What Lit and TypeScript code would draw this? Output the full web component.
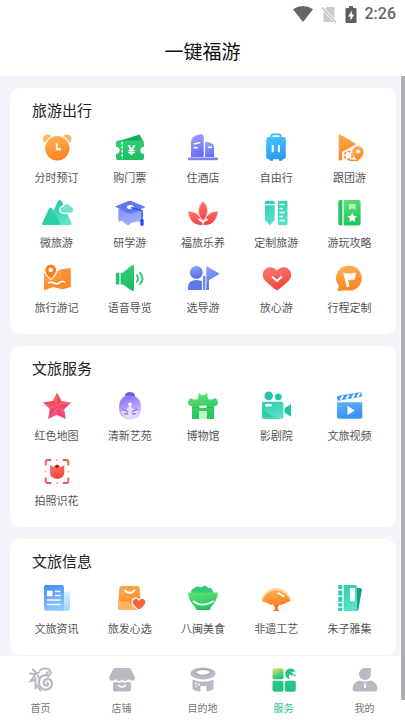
import { LitElement, html, svg, css, SVGTemplateResult } from "lit";
import { customElement } from "lit/decorators.js";
import { classMap } from "lit/directives/class-map.js";

type Item = { label: string; icon: SVGTemplateResult };
type Section = { title: string; items: Item[] };

// Two-stop gradients shared by the icons: id, start colour, end colour.
const gradients: [string, string, string][] = [
  ["orange", "#ffb558", "#fd8424"],
  ["amber", "#ffa94a", "#fb8a2c"],
  ["green", "#2fd07a", "#1fbf66"],
  ["lime", "#62e374", "#22c55e"],
  ["violet", "#a3a5fa", "#6a70f3"],
  ["indigo", "#7f93f8", "#a5b0fb"],
  ["periwinkle", "#8fa4fb", "#5573f0"],
  ["sky", "#43c6fb", "#2f9df4"],
  ["teal", "#18c9a0", "#5fe6c6"],
  ["aqua", "#2fcdb0", "#58e0c8"],
  ["red", "#fb7a72", "#f5433f"],
  ["rose", "#fb6c4d", "#fa4f8a"],
  ["purple", "#7d68f2", "#d9c8ff"],
  ["blue", "#3f8bf8", "#8cc6fd"],
  ["azure", "#58b1fb", "#3a93f3"],
  ["pale", "#e4f3ff", "#a5dafe"],
  ["leaf", "#e9e05b", "#18c183"],
];

const i = {
  clock: svg`
    <circle cx="5.5" cy="6" r="4.5" fill="#ffb566"/><circle cx="25" cy="6" r="4.5" fill="#ffb566"/>
    <circle cx="15.3" cy="15.3" r="13.4" fill="#fff"/>
    <circle cx="15.3" cy="15.3" r="12.2" fill="url(#orange)"/>
    <path d="M14.8 10.2v6h4.2" fill="none" stroke="#fff" stroke-width="2"/>`,
  ticket: svg`
    <path d="M4 8 24.5 1.4 28 8z" fill="#17a956"/>
    <path d="M3 7.5h24a2 2 0 0 1 2 2v4.2a3.6 3.6 0 0 0 0 7.2V25a2 2 0 0 1-2 2H3a2 2 0 0 1-2-2v-4.100a3.6 3.6 0 0 0 0-7.200V9.500a2 2 0 0 1 2-2z" fill="url(#green)"/>
    <path d="M7.200 9v17" stroke="#fff" stroke-width="1.600" stroke-dasharray="2.400 1.700"/>
    <text class="yen" x="16.500" y="21.500" text-anchor="middle">¥</text>`,
  hotel: svg`
    <path d="M3 24V9C3 4 9 1.300 13 1.300q2.700 0 2.700 3V24z" fill="url(#violet)"/>
    <path d="M17 24V8.700q7 .3 9 4V24z" fill="url(#violet)"/>
    <rect x="0" y="24.600" width="30" height="2.600" rx="1" fill="#7d81f5"/>
    <path d="M5.700 11 12.300 9.500M5.700 14.700h4M20 14.300h4" stroke="#fff" stroke-width="1.600"/>`,
  suitcase: svg`
    <path d="M10.500 5V2.800q0-1.500 1.500-1.500h6q1.500 0 1.500 1.500V5" fill="none" stroke="#3ab5f8" stroke-width="1.800"/>
    <path d="M8 25h4v2.800H9zM18 25h4l-1 2.800h-3z" fill="#2a98ee"/>
    <rect x="5.200" y="4" width="19.600" height="22.300" rx="3" fill="url(#sky)"/>
    <path d="M11.700 12v7.200M17.900 12v7.200" stroke="#fff" stroke-width="2"/>`,
  tour: svg`
    <path d="M4.700 2.400q0-1.500 1.500-.8L21 10.300q1.300.9 0 1.700L8.200 19v8.300H4.700z" fill="url(#amber)"/>
    <circle cx="14.500" cy="22.400" r="5.800" fill="#fff"/>
    <circle cx="14.500" cy="22.400" r="4" fill="none" stroke="#f98b34" stroke-width="1.600" stroke-dasharray="3 1.400"/>
    <path d="M24 12.800a6 6 0 0 1 6 6c0 3.500-3 6.500-6 9-3-2.500-6-5.500-6-9a6 6 0 0 1 6-6z" fill="url(#orange)" stroke="#fff" stroke-width=".6"/>
    <circle cx="24" cy="18.600" r="2" fill="#fff"/><path d="M15 27.300h9" stroke="#f98b34" stroke-width="1.500"/>`,
  mountain: svg`
    <path d="M14 27 10.500 15 15.500 4q2.300-4 4.700 0l9.300 21q.5 2-1 2z" fill="url(#teal)"/>
    <path d="M1.500 27q-2 0-1.200-2L6.800 11q1.800-3 3.600 0l7.600 14q.7 2-1 2z" fill="#2bd0a8"/>
    <path d="M21.300 15.300a3.500 3.500 0 0 1-.3-7 4.500 4.500 0 0 1 8-.3 3.700 3.700 0 0 1-.2 7.300z" fill="#6fe3cb" stroke="#fff" stroke-width="1.300"/>`,
  cap: svg`
    <path d="M3.300 11v13q4-2.500 6.500 1.500l3.500 2q2.500-3.500 6-3 4.500-1.800 6.700 0V11z" fill="url(#indigo)"/>
    <path d="M0 8.400 13.500 3q1.500-.5 3 0L30.500 9l-14 6.600q-1.500.6-3 0z" fill="#6577ee"/>
    <ellipse cx="15.300" cy="9" rx="3.300" ry="2" fill="#fff"/>
    <path d="m16 9.500 11 3.200v9" fill="none" stroke="#2b50e8" stroke-width="1.500"/>
    <rect x="25.400" y="21" width="3.300" height="6.800" rx="1" fill="#2049ea"/>`,
  lotus: svg`
    <path d="M0 13.600q9-.6 13.600 8.400l1 4.900Q2.800 28.500 0 13.600zM30 13.600q-9-.6-13.600 8.400l-1 4.900Q27.200 28.500 30 13.600z" fill="url(#red)"/>
    <path d="M15 2.800q9.400 9.700 0 20.700-9.400-11 0-20.700z" fill="url(#red)" stroke="#fff" stroke-width=".7"/>
    <path d="m10.500 21 4.500 3 4.500-3" fill="none" stroke="#fff" stroke-width="1.600"/>`,
  pencil: svg`
    <path d="M4 4.200q0-1.500 1.500-1.500h6.700q1.500 0 1.500 1.500V6H4zM4 7.200h9.700V22l-4.800 5.500L4 22z" fill="url(#aqua)"/>
    <rect x="17" y="2.700" width="9.500" height="24.600" rx="1.500" fill="url(#aqua)"/>
    <path d="M17 6.500h5M17 10.500h3.500M17 14.500h5M17 18.500h3.500M17 22.500h5" transform="translate(1.500)" stroke="#fff" stroke-width="1.400"/>`,
  guidebook: svg`
    <path d="M8.400 2v25.600H6.300q-2-.1-2-2V4q0-2 2-2z" fill="#27c463"/>
    <path d="M9.600 2h15q2 0 2 2v21.600q0 2-2 2h-15z" fill="url(#lime)"/>
    <path d="M15 6h6.600v6l-3.300-1.800L15 12z" fill="#b5f3bf"/>
    <path d="m18.300 14.800 1.500 3 3.300.5-2.400 2.300.6 3.300-3-1.600-3 1.600.6-3.300-2.400-2.300 3.300-.5z" fill="#fff"/>`,
  map: svg`
    <path d="M2 10.500q4.500 2 8 0l9-4 9.700-1.600V24l-8.500 2.300L11 24l-9 3.500z" fill="url(#amber)"/>
    <path d="m19 6.500 9.700-1.600V24l-8.500 2.300z" fill="#fb7f18" opacity=".35"/>
    <path d="M6 20.300c5-3.500 6.500 2 10 .3s4-4 7-.8" fill="none" stroke="#fff" stroke-width="1.500"/>
    <path d="M8.700 1a6 6 0 0 1 6 6c0 3.500-3 7-6 9.600-3-2.600-6-6.100-6-9.600a6 6 0 0 1 6-6z" fill="#fb7d1c" stroke="#fff" stroke-width="1.200"/>
    <circle cx="8.700" cy="6.900" r="2.200" fill="#fff"/>`,
  speaker: svg`
    <rect x=".8" y="9.700" width="3.600" height="11.700" rx="1" fill="#23c46a"/>
    <path d="M5.600 9.700h2.200L16.500 2.400q2.500-1.300 2.500 1.100v23q0 2.400-2.500 1.100l-8.700-6.200H5.600z" fill="url(#green)"/>
    <path d="M21.800 12.300q2.300 3.200 0 6.400M25 9.800q5 5.700 0 11.400" fill="none" stroke="#25c56c" stroke-width="1.800" stroke-linecap="round"/>`,
  guide: svg`
    <path d="M0 27v-3q.3-6.800 8.500-7 4 0 5.500 1.500V27z" fill="#5f77ef"/>
    <circle cx="8.300" cy="9.400" r="6.400" fill="url(#periwinkle)"/>
    <rect x="15" y="13" width="2.400" height="14" fill="#6d84f2"/>
    <path d="M18.300 4q0-1 1-.6L31 10.200q.8.500 0 1L21 17v10h-2.700z" fill="url(#periwinkle)"/>`,
  heart: svg`
    <path d="M16 27.300Q14 26.800 4.500 18C-1.500 11.800 3.500 4.300 9 4.300q4 0 7 3.300 3-3.300 7-3.300c5.500 0 10.500 7.500 4.500 13.700Q18 26.800 16 27.300z" fill="url(#red)"/>
    <path d="m11 13.500 5 4.500 5-4.500" fill="none" stroke="#fff" stroke-width="2"/>`,
  route: svg`
    <path d="M15.800 2.800a12.400 12.400 0 1 1-3.500 24.400L4.500 28q-1.200 0-.8-1.300l1-4A12.400 12.400 0 0 1 15.800 2.800z" fill="url(#orange)"/>
    <path d="M9 9.500q5 2 13.300-.1l-1.800 7.300q-4-.8-6.300.6l1.300 6.700h-2.700z" fill="#fff"/>`,
  star: svg`
    <path d="m15 1.700 4.400 8.400 9.600 1.500-6.800 6.700L23.800 28 15 23.700 6.200 28l1.600-9.700L1 11.600l9.600-1.500z" fill="url(#rose)"/>
    <path d="M15 1.700V16l4.400-5.900zM29 11.600 15 16l7.200 2.300zM23.800 28 15 16v7.700zM6.200 28 15 16l-7.200 2.300zM1 11.600 15 16l-4.400-5.900z" fill="#e5234e" opacity=".35"/>`,
  lady: svg`
    <ellipse cx="15" cy="4.600" rx="5" ry="3.600" fill="#6f5be0"/>
    <path d="M15 4.500c8 0 11 5 11 12s-3.500 12-11 12-11-5-11-12 3-12 11-12z" fill="url(#purple)"/>
    <path d="M6 20.500q6-1.500 9-6.500 3 5 9 6.500-2.500 7.300-9 7.300t-9-7.300z" fill="#e5d9ff"/>
    <circle cx="15" cy="13.300" r="1.800" fill="#fff"/>
    <path d="M7.500 18.500q3 .2 5.500 2.600M22.500 18.500q-3 .2-5.500 2.600M9 22.500q2 1 4 0M17 22.500q2 1 4 0" fill="none" stroke="#7d5fe6" stroke-width="1.200"/>`,
  gate: svg`
    <path d="M10.500 5V2.500h2V4h5V2.500h2V5l1 3.500q4.500.5 6.700-1.500 3 1.700 2.800 5.500-1.500 3-4 2.500v13h-7V20h-8v8H4V15q-2.500.5-4-2.500Q-.2 8.700 2.800 7 5 9 9.500 8.500z" fill="url(#lime)"/>
    <path d="M11 20h8v8h-8z" fill="#b9f7c8"/><path d="M4 16.500h22" stroke="#14b554" stroke-width=".8" opacity=".6"/>
    <rect x="11.500" y="14.600" width="7" height="2.400" fill="#fff"/>`,
  camera: svg`
    <circle cx="7.700" cy="4.900" r="4.300" fill="#22c9a6"/><circle cx="17.300" cy="5.800" r="3.400" fill="#22c9a6"/>
    <rect x="1" y="10.700" width="21.400" height="17" rx="2" fill="url(#aqua)"/>
    <path d="M1 17c5 6 10 9 19 10.700H3q-2 0-2-2z" fill="#1fc39f" opacity=".6"/>
    <path d="M23.600 17.300 30 13v12.700l-6.400-3.900z" fill="#1fc6a5"/>
    <rect x="4" y="13" width="7" height="2.400" rx="1" fill="#fff"/>`,
  clapper: svg`
    <path d="M3 6.500q0-1.500 1.500-1.700L26 1.200q1.500 0 1.700 1.200l.3 3.200L4 9.800l-.5-.5z" fill="#3f9cf6"/>
    <path d="m9.200 4.700-2.700 4M15 3.700l-2.700 4M20.800 2.700l-2.700 4M26 2l-2.500 3.700" stroke="#fff" stroke-width="1.800"/>
    <path d="M3 11.300h25.300v14.400q0 2-2 2H5q-2 0-2-2z" fill="url(#azure)"/>
    <path d="M13.500 15v9l7.300-4.500z" fill="#fff"/>`,
  flower: svg`
    <path d="M3.700 9.500V6q0-2 2-2h3.500M20.800 4h3.500q2 0 2 2v3.500M26.300 21.500V25q0 2-2 2h-3.500M9.200 27H5.700q-2 0-2-2v-3.500" fill="none" stroke="#f4584f" stroke-width="1.900"/>
    <path d="M15 3v2M15 26v2M2.700 15.500h2M25.300 15.500h2" stroke="#fba39d" stroke-width="1.500"/>
    <path d="m8 9 3.500 2L15 8.500l3.500 2.500L22.300 9v7c0 4.500-3 6.800-7.200 6.800S8 20.500 8 16z" fill="url(#red)"/>
    <path d="m12.500 10.300 2.500-1.800 2.500 1.800-2.500 1.900z" fill="#a81420"/>`,
  news: svg`
    <path d="M21 7.500h5q2 0 2 2v15.300q0 2-2 2H17z" fill="url(#pale)"/>
    <rect x="2" y="1" width="20" height="25.700" rx="2" fill="url(#blue)"/>
    <rect x="5" y="6.700" width="5.600" height="5.600" fill="#fff"/>
    <path d="M13 7.500h5.500M13 11.500h5.500M5 16h13.500M5 20.500h13.500" stroke="#fff" stroke-width="1.500"/>`,
  bag: svg`
    <path d="M6.500 2h16q2 0 2.200 2l1.300 20q0 2-2 2H5q-2 0-2-2L4.300 4q.2-2 2.200-2z" fill="url(#amber)"/>
    <path d="M3.300 18.500C10 15 19 20 21 26H5q-2 0-2-2z" fill="#ffd08a" opacity=".6"/>
    <path d="M9.500 5.800q5.300 6.500 10.600 0" fill="none" stroke="#fff" stroke-width="2"/>
    <path d="M24 26.400c-4.500-3-7-5.500-7-8.300 0-4 4.700-5.400 7-2.300 2.300-3.100 7-1.700 7 2.300 0 2.800-2.500 5.300-7 8.300z" fill="#f9633c" stroke="#fff" stroke-width="1.300"/>`,
  bowl: svg`
    <path d="M4 10Q1.500 5.500 6 4.500 9 1 13 3.500q4-3.500 7 .3 5-.3 5.500 6.200z" fill="#2fcb71"/>
    <path d="M0 8.500h30Q29.500 16 23 23l-1 3H8.500L7 23Q.5 17 0 8.500z" fill="url(#lime)"/>
    <path d="M5 17q9.500 7.300 20.500 0" fill="none" stroke="#eafff0" stroke-width="1.700"/>`,
  fan: svg`
    <path d="M0 15.500C7-.2 23.500-.2 30.500 15.500l-10.500 5-4.700-1-4.800 1z" fill="#ffd9a0"/>
    <path d="M1 17C7.500 2.800 23 2.800 29.500 17L20 20.900q-4.700-2.300-9.500 0z" fill="url(#orange)"/>
    <path d="m17.300 9.200 5.500 3" stroke="#fff" stroke-width="2" stroke-linecap="round"/>
    <path d="M12 20.500q3.300-1.500 6.600 0L16.500 24l1.500 3h-5.500l1.600-3z" fill="#f9772a"/>`,
  notebook: svg`
    <path d="m22 3.800 4.600.5q1.500.3 1.300 1.800L24.500 25q-.4 2-2.500 2z" fill="#159e8a"/>
    <path d="M9.700 1H21q2 0 2 2v22q0 2-2 2H9.700z" fill="url(#aqua)"/>
    <path d="M4.300 1h4v4h-4zM4.300 6.400h4v5h-4zM4.300 12.800h4v5h-4zM4.300 19.200h4v3.200h-4zM4.300 23.800h4V27h-4z" fill="#2dcab2"/>
    <rect x="16" y="4" width="5" height="13.300" fill="#fff"/>`,
};

const sections: Section[] = [
  {
    title: "旅游出行",
    items: [
      { label: "分时预订", icon: i.clock },
      { label: "购门票", icon: i.ticket },
      { label: "住酒店", icon: i.hotel },
      { label: "自由行", icon: i.suitcase },
      { label: "跟团游", icon: i.tour },
      { label: "微旅游", icon: i.mountain },
      { label: "研学游", icon: i.cap },
      { label: "福旅乐养", icon: i.lotus },
      { label: "定制旅游", icon: i.pencil },
      { label: "游玩攻略", icon: i.guidebook },
      { label: "旅行游记", icon: i.map },
      { label: "语音导览", icon: i.speaker },
      { label: "选导游", icon: i.guide },
      { label: "放心游", icon: i.heart },
      { label: "行程定制", icon: i.route },
    ],
  },
  {
    title: "文旅服务",
    items: [
      { label: "红色地图", icon: i.star },
      { label: "清新艺苑", icon: i.lady },
      { label: "博物馆", icon: i.gate },
      { label: "影剧院", icon: i.camera },
      { label: "文旅视频", icon: i.clapper },
      { label: "拍照识花", icon: i.flower },
    ],
  },
  {
    title: "文旅信息",
    items: [
      { label: "文旅资讯", icon: i.news },
      { label: "旅发心选", icon: i.bag },
      { label: "八闽美食", icon: i.bowl },
      { label: "非遗工艺", icon: i.fan },
      { label: "朱子雅集", icon: i.notebook },
    ],
  },
];

const tabs: (Item & { active?: boolean })[] = [
  {
    label: "首页",
    icon: svg`<g fill="none" stroke="currentColor" stroke-linecap="round">
      <path d="M11.500 3.600C15 .2 22.500 1 22.800 5.500c.2 2.600-2.700 3.500-3.800 1.600-.8-1.500.7-2.600 1.600-2" stroke-width="1.800"/>
      <path d="M20.500 9.500c-3-3-9.500-.8-9.600 5.500-.1 5.500 4 8.500 8 7.500 6.500-1.500 6.600-10 1-10.300-4.600-.1-5.600 5.600-1.900 6.300 2 .3 2.800-1.700 1.600-2.700" stroke-width="2.200"/>
      <path d="M5 2.500 7.500 5M1.800 6.500l5.500.6 3.500-1.600M7.500 7.500 2.500 14l5-1.200M7.500 11v10.500M9.800 8.500l1.500 3M8.500 18l4 5.500" stroke-width="2"/></g>`,
  },
  {
    label: "店铺",
    icon: svg`<path d="M6 1h14q1.300 0 2 1.200l3.700 7.600q.6 3.600-2.500 4-2.800.2-4-1.800-1.200 2.200-3.500 2-1.700-.1-2.700-1.700-1 1.600-2.700 1.700-2.300.2-3.500-2-1.200 2-4 1.800-3.100-.4-2.500-4L4 2.200Q4.700 1 6 1z" fill="currentColor"/>
      <path d="M4 15.500q2.300 0 3.200-1 3 2.300 5.800.2 2.800 2.100 5.800-.2.900 1 3.200 1V22q0 2.500-2.500 2.500h-13Q4 24.500 4 22z" fill="currentColor"/>
      <path d="M9.500 18.300q3.500 3 7 0" fill="none" stroke="#fff" stroke-width="1.600" stroke-linecap="round"/>`,
  },
  {
    label: "目的地",
    icon: svg`<ellipse cx="13" cy="6.500" rx="12.500" ry="6" fill="currentColor"/>
      <ellipse cx="13" cy="5.300" rx="7.500" ry="3" fill="#fff" stroke="#a3a4af" stroke-width="1.200"/>
      <path d="M2.500 12.500q10.500 4.500 21 0V22q-2.500 2-7 2.500V19h-6v5.500q-5.500-.5-8-2.500z" fill="currentColor"/>
      <path d="M6 15.500v2.200M9 16.500v2M5.500 19.500h1.500" stroke="#fff" stroke-width="1.500"/>`,
  },
  {
    label: "服务",
    active: true,
    icon: svg`<rect x="1.500" y="1.300" width="11" height="11" rx="2" fill="url(#leaf)"/>
      <rect x="1.500" y="13.700" width="11" height="11" rx="2" fill="currentColor"/>
      <rect x="13.800" y="13.700" width="11" height="11" rx="2" fill="currentColor"/>
      <path d="M24.500 5C23.500 0 15.500.200 14.300 5.500c-.8 4 2.200 6.800 5 6.500-1.800-1-2-3.500-.3-4.300 1.300-.7 1.700.300 1.300 1 2.200 0 2.300-2.700.4-3.300q2.300-1.500 3.800-.4z" fill="currentColor"/>
      <path d="M22 8.500q1.500-1 2.300.7" stroke="currentColor" stroke-width="1.400" fill="none"/>`,
  },
  {
    label: "我的",
    icon: svg`<path d="M13 1h5q1 0 1 1v5a6 6 0 1 1-6-6z" fill="currentColor"/>
      <path d="M7 13.500q6 2 12 0 6 2 6.500 7.500 0 3.500-3 3.500h-19q-3 0-3-3.500Q1 15.500 7 13.500z" fill="currentColor"/>
      <path d="M13 16.500v4.500" stroke="#fff" stroke-width="1.800"/>`,
  },
];

@customElement("app-root")
export class AppRoot extends LitElement {
  static styles = css`
    :host {
      display: flex;
      flex-direction: column;
      min-height: 100vh;
      background: #fff;
      color: #222;
      font-family: "Noto Sans CJK SC", sans-serif;
    }
    * {
      box-sizing: border-box;
    }
    svg {
      display: block;
      overflow: visible;
    }
    .defs {
      position: absolute;
      width: 0;
      height: 0;
    }
    .status {
      display: flex;
      justify-content: flex-end;
      align-items: center;
      height: 28px;
      padding-right: 9px;
      gap: 8px;
      color: #666;
      font: 500 16px/28px Roboto, sans-serif;
    }
    .title {
      margin: 0;
      height: 48px;
      text-align: center;
      color: #111;
      font-size: 19px;
      font-weight: 400;
      line-height: 46px;
    }
    .page {
      position: relative;
      flex: 1;
      display: flex;
      flex-direction: column;
    }
    .thumb {
      position: absolute;
      top: 0;
      right: 0;
      bottom: 20px;
      width: 4px;
      background: #afafb3;
    }
    main {
      flex: 1;
      display: flex;
      flex-direction: column;
      gap: 12px;
      padding: 12px 9px 1px 10px;
      background: #f4f5fa;
    }
    .card {
      padding: 12px 10px 19px;
      border-radius: 10px;
      background: #fff;
    }
    h2 {
      margin: 0 0 13px;
      padding-left: 12px;
      font-size: 15px;
      font-weight: 400;
      line-height: 20px;
    }
    .grid {
      display: grid;
      grid-template-columns: repeat(5, 1fr);
      row-gap: 13px;
    }
    .item {
      display: flex;
      flex-direction: column;
      align-items: center;
      gap: 6px;
      padding: 0;
      border: 0;
      background: none;
      color: #555;
      font: inherit;
      font-size: 11px;
      line-height: 16px;
      white-space: nowrap;
      cursor: pointer;
    }
    .yen {
      fill: #fff;
      font: 700 14px "Liberation Sans", sans-serif;
    }
    nav {
      display: grid;
      grid-template-columns: repeat(5, 1fr);
      height: 64px;
      padding-top: 11px;
      background: #fff;
    }
    .tab {
      display: flex;
      flex-direction: column;
      align-items: center;
      gap: 8px;
      color: #777;
      font-size: 10px;
      line-height: 14px;
      text-decoration: none;
    }
    .tab svg {
      color: #b8b9c3;
    }
    .tab.active,
    .tab.active svg {
      color: #28c486;
    }
  `;

  render() {
    return html`
      <svg class="defs" aria-hidden="true">
        <defs>
          ${gradients.map(
            ([id, from, to]) => svg`<linearGradient id=${id} x1="0" y1="0" x2=".3" y2="1">
              <stop offset="0" stop-color=${from}/><stop offset="1" stop-color=${to}/>
            </linearGradient>`
          )}
        </defs>
      </svg>
      <header>
        <div class="status">
          <svg width="20" height="16" viewBox="0 0 20 16"><path d="M0 3.200q10-6.400 20 0L10 16z" fill="#666"/></svg>
          <svg width="16" height="17" viewBox="0 0 16 17">
            <path d="M6 1h7.500v15H2.500V4.500z" fill="#cacaca"/>
            <path d="m1 1.500 14 15" stroke="#fff" stroke-width="3"/>
            <path d="m1 1.500 14 15" stroke="#c2c2c2" stroke-width="1.500"/>
          </svg>
          <svg width="12" height="17" viewBox="0 0 12 17">
            <path d="M4 0h4v2h2.500q1 0 1 1v13q0 1-1 1h-9q-1 0-1-1V3q0-1 1-1H4z" fill="#5f5f5f"/>
            <path d="M7 4.500 3 10.500h2.500V14.500l3.700-6H6.700z" fill="#fff"/>
          </svg>
          <span>2:26</span>
        </div>
        <h1 class="title">一键福游</h1>
      </header>
      <div class="page">
        <main>
          ${sections.map(
            (s) => html`<section class="card">
              <h2>${s.title}</h2>
              <div class="grid">
                ${s.items.map(
                  (item) => html`<button class="item" type="button">
                    <svg width="30" height="30" viewBox="0 0 30 30" aria-hidden="true">${item.icon}</svg>
                    <span>${item.label}</span>
                  </button>`
                )}
              </div>
            </section>`
          )}
        </main>
        <nav>
          ${tabs.map(
            (t) => html`<a class=${classMap({ tab: true, active: !!t.active })} href="#">
              <svg width="26" height="26" viewBox="0 0 26 26" aria-hidden="true">${t.icon}</svg>
              <span>${t.label}</span>
            </a>`
          )}
        </nav>
        <div class="thumb"></div>
      </div>
    `;
  }
}
